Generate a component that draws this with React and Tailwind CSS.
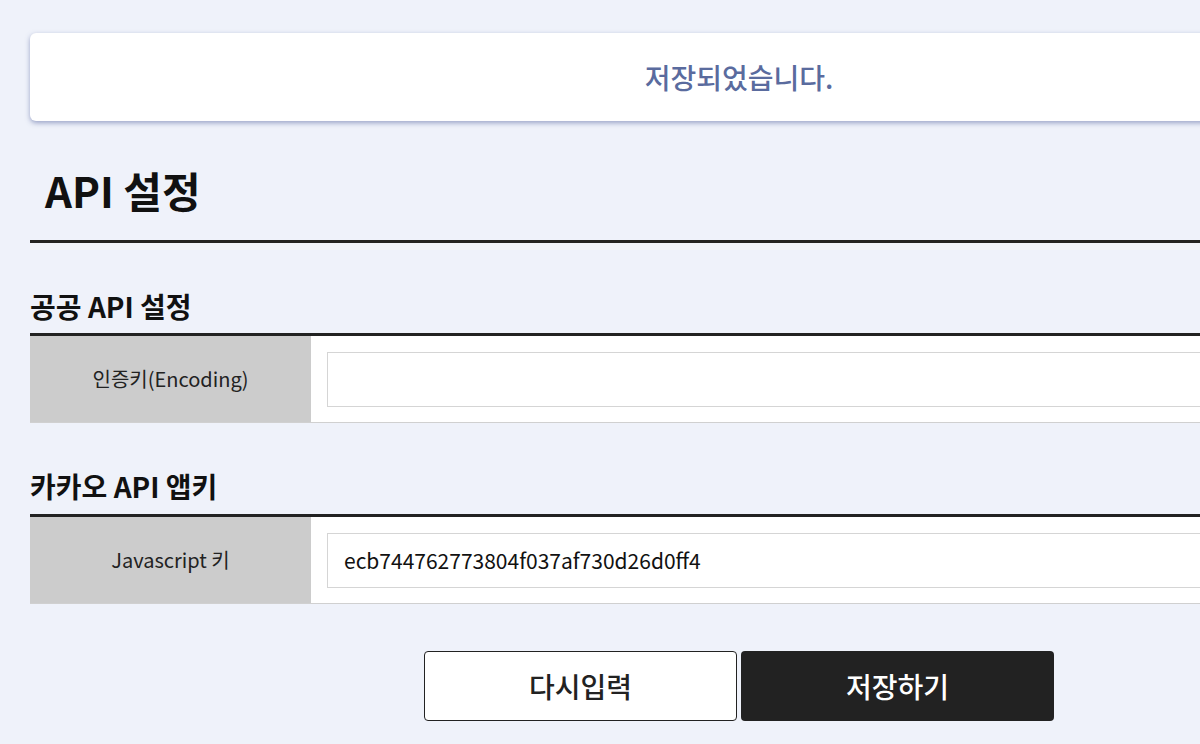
import React from 'react';

const font = { fontFamily: '"Noto Sans CJK KR", "Noto Sans", sans-serif' };

const Row = ({ label, value }) => (
  <div className="border-t-[3px] border-[#222] border-b border-b-[#d0d0d0] flex h-[90px]">
    <div className="w-[281px] shrink-0 bg-[#cccccc] flex items-center justify-center text-[20px] text-[#222]">
      {label}
    </div>
    <div className="flex-1 bg-white flex items-center pl-4">
      <input
        readOnly
        value={value}
        className="w-full h-[55px] border border-[#d5d5d5] bg-white px-4 text-[21px] text-[#111] outline-none"
        style={font}
      />
    </div>
  </div>
);

const App = () => {
  return (
    <div className="min-h-screen bg-[#eff2fa] overflow-hidden pl-[30px] pt-[33px]" style={font}>
      <div className="w-[1418px]">
        {/* toast */}
        <div className="h-[88px] rounded-md bg-white shadow-[0_2px_5px_rgba(70,85,150,0.5)] flex items-center justify-center text-[28px] font-medium text-[#5a6b9e]">
          저장되었습니다.
        </div>

        {/* title */}
        <div className="mt-[39px] pb-[20px] border-b-[3px] border-[#222]">
          <h2 className="px-[15px] h-[60px] leading-[60px] text-[42px] font-bold text-[#111]">API 설정</h2>
        </div>

        {/* 공공 API */}
        <h3 className="mt-[45px] mb-[9px] h-[36px] leading-[36px] text-[28px] font-bold text-[#111]">공공 API 설정</h3>
        <Row label="인증키(Encoding)" value="" />

        {/* 카카오 */}
        <h3 className="mt-[45px] mb-[10px] h-[36px] leading-[36px] text-[28px] font-bold text-[#111]">카카오 API 앱키</h3>
        <Row label="Javascript 키" value="ecb744762773804f037af730d26d0ff4" />

        {/* buttons */}
        <div className="mt-[47px] flex justify-center gap-1">
          <button className="w-[313px] h-[70px] rounded bg-white border border-[#222] text-[28px] font-medium text-[#222]" style={font}>
            다시입력
          </button>
          <button className="w-[313px] h-[70px] rounded bg-[#222] text-[28px] font-medium text-white" style={font}>
            저장하기
          </button>
        </div>
      </div>
    </div>
  );
};

export default App;
